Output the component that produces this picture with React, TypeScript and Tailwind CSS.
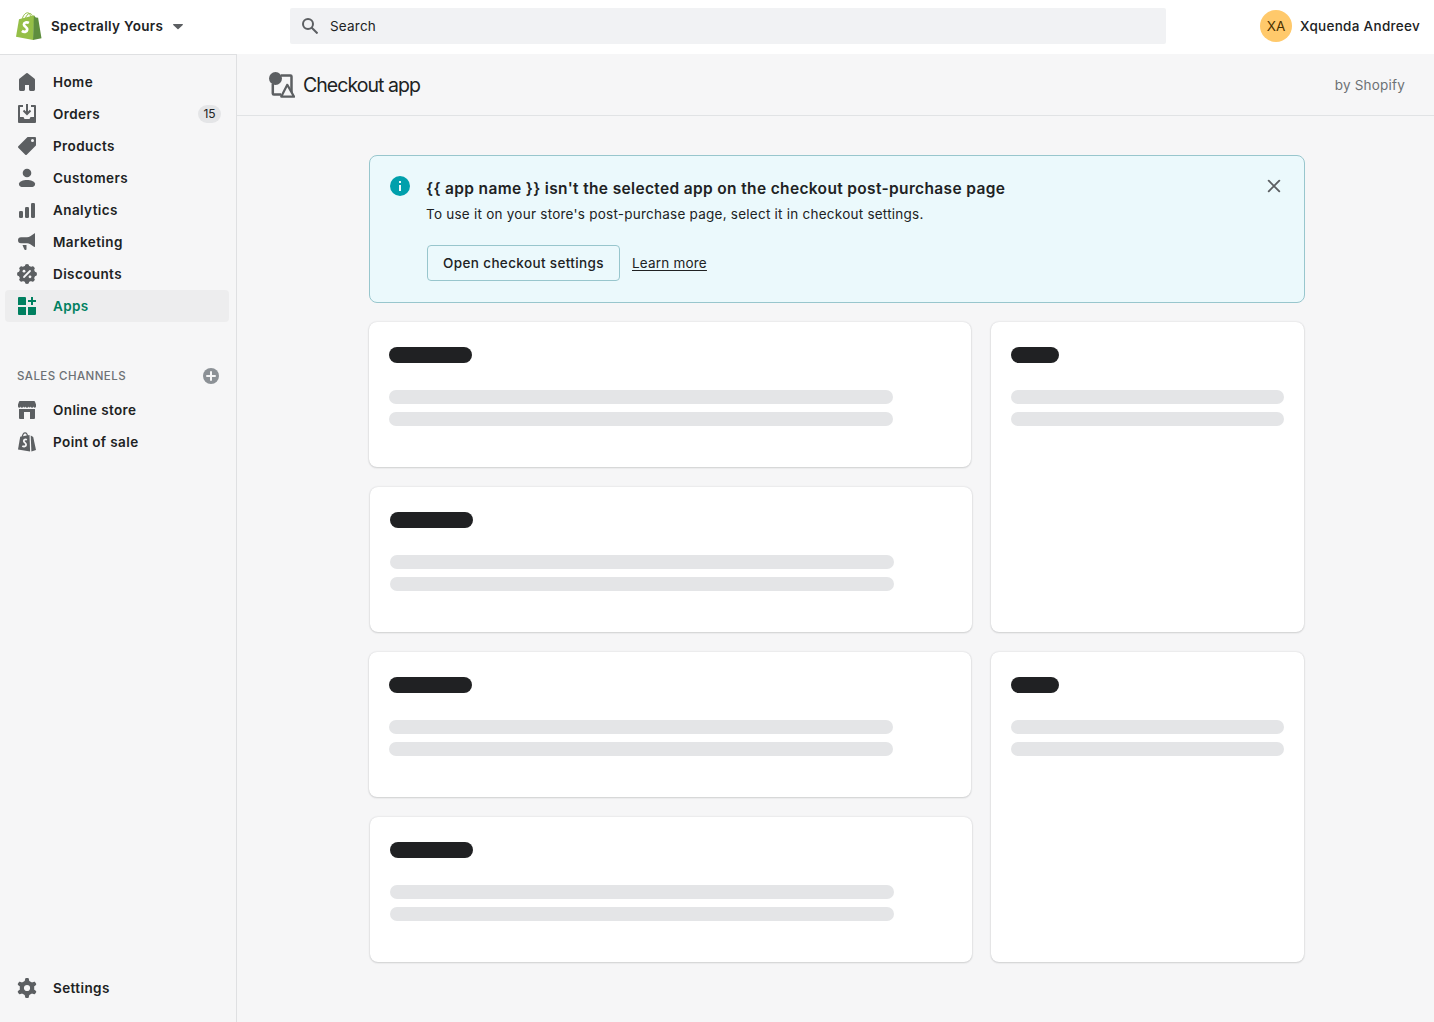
import type { ReactNode } from "react";

type NavEntry = {
  label: string;
  icon: ReactNode;
  badge?: string;
  active?: boolean;
};

function Icon({ children }: { children: ReactNode }) {
  return (
    <svg viewBox="0 0 20 20" className="h-5 w-5 shrink-0" fill="currentColor">
      {children}
    </svg>
  );
}

const HomeIcon = (
  <Icon>
    <path d="M9.3 1.3a1.2 1.2 0 0 1 1.4 0l6.6 5.1c.4.3.7.8.7 1.3v9.9a1.4 1.4 0 0 1-1.4 1.4h-3.2a1.4 1.4 0 0 1-1.4-1.4V13H8v4.6A1.4 1.4 0 0 1 6.6 19H3.4A1.4 1.4 0 0 1 2 17.6V7.7c0-.5.3-1 .7-1.3z" />
  </Icon>
);

const OrdersIcon = (
  <Icon>
    <path d="M2 1a1 1 0 0 0-1 1v16a1 1 0 0 0 1 1h16a1 1 0 0 0 1-1V2a1 1 0 0 0-1-1h-4v2h3v10h-3.5l-1 2h-5l-1-2H3V3h3V1z" />
    <path d="M9 0h2v7.6l1.8-1.8 1.4 1.4L10 11.4 5.8 7.2l1.4-1.4L9 7.6z" />
  </Icon>
);

const ProductsIcon = (
  <Icon>
    <path
      fillRule="evenodd"
      d="M10.3 1.3c.2-.2.4-.3.7-.3h7a1 1 0 0 1 1 1v7c0 .3-.1.5-.3.7l-9 9a1 1 0 0 1-1.4 0l-7-7a1 1 0 0 1 0-1.4zM15.5 6a1.5 1.5 0 1 0 0-3 1.5 1.5 0 0 0 0 3z"
    />
  </Icon>
);

const CustomersIcon = (
  <Icon>
    <circle cx="10" cy="5" r="4.3" />
    <path d="M2 15.6C2.6 13.4 6 12 10 12s7.4 1.4 8 3.6c.4 1.7-.8 3.4-2.5 3.4h-11C2.8 19 1.6 17.3 2 15.6z" />
  </Icon>
);

const AnalyticsIcon = (
  <Icon>
    <rect x="2" y="11" width="4" height="7" rx="1.3" />
    <rect x="8" y="7" width="4" height="11" rx="1.3" />
    <rect x="14" y="3" width="4" height="15" rx="1.3" />
  </Icon>
);

const MarketingIcon = (
  <Icon>
    <path d="M18 1.6v13c0 .4-.4.6-.7.4l-4-2.7a6 6 0 0 0-3.3-1H4a3 3 0 0 1 0-6h6a6 6 0 0 0 3.3-1l4-2.9c.3-.3.7-.2.7.2z" />
    <path d="M5.5 13h4v4.3c0 .4-.3.7-.7.7h-.6c-.3 0-.6-.1-.8-.4z" />
  </Icon>
);

const DiscountsIcon = (
  <Icon>
    <circle cx="10" cy="10" r="8.3" />
    {[0, 45, 90, 135, 180, 225, 270, 315].map((angle) => (
      <circle key={angle} cx="10" cy="2.2" r="2.2" transform={`rotate(${angle} 10 10)`} />
    ))}
    <path d="m7 13 6-6" stroke="#f6f6f7" strokeWidth="1.8" strokeLinecap="round" />
    <circle cx="7" cy="7.2" r="1.4" fill="#f6f6f7" />
    <circle cx="13" cy="12.8" r="1.4" fill="#f6f6f7" />
  </Icon>
);

const AppsIcon = (
  <Icon>
    <path d="M2 1h6a1 1 0 0 1 1 1v7H1V2a1 1 0 0 1 1-1zM1 11h8v8H2a1 1 0 0 1-1-1zM11 11h8v7a1 1 0 0 1-1 1h-7zM14 1h2v3h3v2h-3v3h-2V6h-3V4h3z" />
  </Icon>
);

const StoreIcon = (
  <Icon>
    <path d="M2.9 1h14.2c.5 0 .8.3.9.7L19 4.5v1.7a1.3 1.3 0 0 1-2.6.3 1.3 1.3 0 0 1-2.6 0 1.3 1.3 0 0 1-2.5 0 1.3 1.3 0 0 1-2.6 0 1.3 1.3 0 0 1-2.5 0 1.3 1.3 0 0 1-2.6 0A1.3 1.3 0 0 1 1 6.2V4.5l1-2.8c.1-.4.4-.7.9-.7z" />
    <path d="M2 9h16v9a1 1 0 0 1-1 1h-4v-7H7v7H3a1 1 0 0 1-1-1z" />
  </Icon>
);

const PointOfSaleIcon = (
  <Icon>
    <path d="M3.2 4.8 12.5 3l.6 16.5L1 17.5z" />
    <path d="M5 6c.4-3 1.7-5.2 3.1-5.2 1.5 0 2.3 1.6 2.4 4" fill="none" stroke="currentColor" strokeWidth="1.2" />
    <path d="m13.7 3.5 2.5 1.5L19 18l-4.6 1.5z" />
    <path d="M9.9 7.8C8.4 7 6.8 7.5 6.8 8.9c0 1.7 2.5 1.9 2.3 4-.2 1.7-2.1 2.1-3.8 1" fill="none" stroke="#f6f6f7" strokeWidth="1.8" />
  </Icon>
);

const SettingsIcon = (
  <Icon>
    <circle cx="10" cy="10" r="5.2" fill="none" stroke="currentColor" strokeWidth="4.2" />
    {[0, 60, 120, 180, 240, 300].map((angle) => (
      <path
        key={angle}
        d="M7.4 4.5 8.2.7c.1-.4.4-.7.8-.7h2c.4 0 .7.3.8.7l.8 3.8z"
        transform={`rotate(${angle} 10 10)`}
      />
    ))}
  </Icon>
);

const mainNav: NavEntry[] = [
  { label: "Home", icon: HomeIcon },
  { label: "Orders", icon: OrdersIcon, badge: "15" },
  { label: "Products", icon: ProductsIcon },
  { label: "Customers", icon: CustomersIcon },
  { label: "Analytics", icon: AnalyticsIcon },
  { label: "Marketing", icon: MarketingIcon },
  { label: "Discounts", icon: DiscountsIcon },
  { label: "Apps", icon: AppsIcon, active: true },
];

const channels: NavEntry[] = [
  { label: "Online store", icon: StoreIcon },
  { label: "Point of sale", icon: PointOfSaleIcon },
];

function NavItem({ entry }: { entry: NavEntry }) {
  return (
    <a
      className={`flex h-8 items-center rounded pr-2 pl-3 ${
        entry.active ? "bg-[#ededee] text-[#008060]" : "text-[#5c5f62]"
      }`}
    >
      {entry.icon}
      <span
        className={`ml-4 flex-1 text-[13.5px] leading-5 font-semibold tracking-[0.4px] ${
          entry.active ? "text-[#008060]" : "text-[#202223]"
        }`}
      >
        {entry.label}
      </span>
      {entry.badge && (
        <span className="flex h-[18px] w-[23px] items-center justify-center rounded-full bg-[#e4e5e7] text-xs text-[#202223]">
          {entry.badge}
        </span>
      )}
    </a>
  );
}

function ShopLogo() {
  return (
    <svg viewBox="0 0 26 28" className="h-7 w-[26px]">
      <path d="M3 7.2 18.3 3.3 17.2 28 0 24.8z" fill="#95bf47" />
      <path d="M17.9 3.4 19.8 5.4l2.3.3L25.5 26.2 17 28z" fill="#5e8e3e" />
      <path
        d="M6 8C6.8 3.7 9.2.8 11.6.8c2 0 2.9 1.8 3 5.2M9.2 7c.7-3 2.6-5.5 4.6-5.5 1.6 0 2.5 1.5 2.6 3.5"
        fill="none"
        stroke="#95bf47"
        strokeWidth="1"
      />
      <path
        d="M12.9 10.9c-2.3-1.2-5-.5-5 1.5 0 2.4 3.7 2.6 3.3 5.4-.3 2.3-3.2 2.7-5.3 1.1"
        fill="none"
        stroke="#fff"
        strokeWidth="2.7"
      />
    </svg>
  );
}

function TopBar() {
  return (
    <header className="flex h-[54px] shrink-0 items-center bg-white">
      <div className="-mt-0.5 flex w-[290px] items-center pl-4">
        <ShopLogo />
        <span className="ml-[9px] text-[13.5px] leading-5 font-semibold tracking-[0.34px]">Spectrally Yours</span>
        <svg viewBox="0 0 10 6" className="mt-px ml-2.5 h-1.5 w-2.5" fill="#5c5f62">
          <path d="M.6 0h8.8c.5 0 .7.5.4.9L5.5 5.1a.7.7 0 0 1-1 0L.2.9C-.1.5.1 0 .6 0z" />
        </svg>
      </div>
      <div className="-mt-0.5 flex h-9 w-[876px] items-center rounded-xs bg-[#f1f2f4] pl-3">
        <svg viewBox="0 0 16 16" className="h-4 w-4" fill="none" stroke="#5c5f62" strokeWidth="2">
          <circle cx="6" cy="6" r="5" />
          <path d="m9.5 9.5 6 6" />
        </svg>
        <span className="ml-3 text-[13.5px] leading-5 tracking-[0.2px]">Search</span>
      </div>
      <div className="-mt-0.5 ml-[94px] flex items-center">
        <span className="flex h-8 w-8 items-center justify-center rounded-full bg-[#ffc96b] text-[13.5px] text-[#4a3000]">
          XA
        </span>
        <span className="ml-2 text-[13.5px] leading-5 font-medium tracking-[0.3px] whitespace-nowrap">
          Xquenda Andreev
        </span>
      </div>
    </header>
  );
}

function Sidebar() {
  return (
    <aside className="flex w-[237px] shrink-0 flex-col border-t border-r border-[#dfe0e2] pt-[11px] pr-[7px] pb-[18px] pl-[5px]">
      <nav>
        {mainNav.map((entry) => (
          <NavItem key={entry.label} entry={entry} />
        ))}
      </nav>
      <div className="mt-11 flex h-5 items-center justify-between pr-2.5 pl-3">
        <span className="text-[11.5px] leading-5 font-medium tracking-[0.44px] text-[#6d7175]">
          SALES CHANNELS
        </span>
        <svg viewBox="0 0 16 16" className="h-4 w-4">
          <circle cx="8" cy="8" r="8" fill="#8c9196" />
          <path d="M8 4v8M4 8h8" stroke="#f6f6f7" strokeWidth="2" strokeLinecap="round" />
        </svg>
      </div>
      <nav className="mt-2">
        {channels.map((entry) => (
          <NavItem key={entry.label} entry={entry} />
        ))}
      </nav>
      <div className="mt-auto">
        <NavItem entry={{ label: "Settings", icon: SettingsIcon }} />
      </div>
    </aside>
  );
}

function PageHeader() {
  return (
    <div className="flex h-[62px] items-center justify-between border-b border-[#e1e3e5] pr-[29px] pl-8">
      <div className="flex items-center">
        <svg viewBox="0 0 26 26" className="h-[26px] w-[26px]" fill="none" stroke="#5c5f62" strokeLinejoin="round">
          <path d="M12 3.6h9.5a1 1 0 0 1 1 1V21M3.8 12v9.4a1 1 0 0 0 1 1H12" strokeWidth="2.5" />
          <path d="m18.3 12.8-6 11.8H25z" strokeWidth="2.2" fill="#f6f6f7" />
          <circle cx="6.5" cy="6.5" r="6.5" fill="#5c5f62" stroke="none" />
        </svg>
        <h1 className="ml-2 text-[19.5px] leading-7 tracking-[-0.95px]">Checkout app</h1>
      </div>
      <span className="text-[13.5px] leading-5 tracking-[0.2px] text-[#6d7175]">by Shopify</span>
    </div>
  );
}

function Banner() {
  return (
    <section className="flex h-[148px] rounded-lg border border-[#98c6cd] bg-[#ebf9fc] pt-5 pr-[23px] pl-5">
      <svg viewBox="0 0 20 20" className="h-5 w-5 shrink-0">
        <circle cx="10" cy="10" r="10" fill="#00a0ac" />
        <path d="M9 5h2v2H9zM9 9h2v6H9z" fill="#ebf9fc" />
      </svg>
      <div className="ml-4 flex-1">
        <h2 className="h-6 pt-px text-[15.5px] leading-6 font-semibold tracking-[0.35px]">
          {"{{ app name }} isn't the selected app on the checkout post-purchase page"}
        </h2>
        <p className="mt-1 text-[13.5px] leading-5 tracking-[0.24px]">
          To use it on your store's post-purchase page, select it in checkout settings.
        </p>
        <div className="mt-[21px] flex items-center">
          <button className="ml-px h-9 w-[193px] rounded border border-[#98c6cd] text-[13.5px] leading-5 font-medium tracking-[0.36px]">
            Open checkout settings
          </button>
          <a className="ml-3 text-[13.5px] leading-5 tracking-[0.2px] underline underline-offset-2">Learn more</a>
        </div>
      </div>
      <svg
        viewBox="0 0 14 14"
        className="mt-[3px] h-3.5 w-3.5 shrink-0"
        fill="none"
        stroke="#5c5f62"
        strokeWidth="1.9"
        strokeLinecap="round"
      >
        <path d="m1.7 1.7 10.6 10.6M12.3 1.7 1.7 12.3" />
      </svg>
    </section>
  );
}

function SkeletonCard({ side, inset }: { side?: boolean; inset?: boolean }) {
  return (
    <div
      className={`rounded-lg bg-white px-5 pt-[25px] shadow-[0_0_2px_rgba(31,33,36,0.16),0_1px_2px_rgba(31,33,36,0.14)] ${
        side ? "h-[310px] w-[313px]" : "h-[145px] w-[602px]"
      } ${inset ? "ml-px" : ""}`}
    >
      <div className={`h-4 rounded-full bg-[#202123] ${side ? "w-12" : "w-[83px]"}`} />
      <div className={`mt-[27px] h-3.5 rounded-full bg-[#e4e5e7] ${side ? "w-full" : "w-[504px]"}`} />
      <div className={`mt-2 h-3.5 rounded-full bg-[#e4e5e7] ${side ? "w-full" : "w-[504px]"}`} />
    </div>
  );
}

export default function App() {
  return (
    <div className="flex h-[1022px] w-[1434px] flex-col overflow-hidden bg-[#f6f6f7] font-['Inter',sans-serif] text-[#202223]">
      <TopBar />
      <div className="flex flex-1">
        <Sidebar />
        <main className="flex-1">
          <PageHeader />
          <div className="pt-[39px] pr-[129px] pl-[132px]">
            <Banner />
            <div className="mt-[19px] flex justify-between">
              <div className="flex flex-col gap-5">
                <SkeletonCard />
                <SkeletonCard inset />
                <SkeletonCard />
                <SkeletonCard inset />
              </div>
              <div className="mr-px flex flex-col gap-5">
                <SkeletonCard side />
                <SkeletonCard side />
              </div>
            </div>
          </div>
        </main>
      </div>
    </div>
  );
}
